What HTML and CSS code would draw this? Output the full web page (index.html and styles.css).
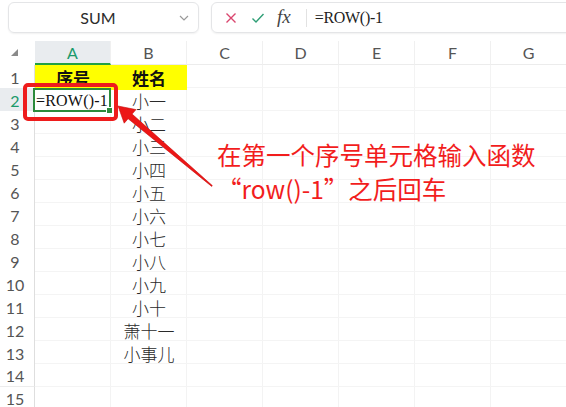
FILE: index.html
```html
<!DOCTYPE html>
<html lang="zh-CN">
<head>
<meta charset="utf-8">
<title>序号函数</title>
<link rel="stylesheet" href="styles.css">
</head>
<body>
<div class="page">
  <div class="toolbar">
    <div class="namebox">
      <span class="name">SUM</span>
      <svg class="chev" width="10" height="6" viewBox="0 0 10 6"><path d="M1 1 L5 5 L9 1" fill="none" stroke="#9a9a9a" stroke-width="1.2"/></svg>
    </div>
    <div class="formula">
      <svg class="ico" width="12" height="12" viewBox="0 0 12 12"><path d="M1.5 1.5 L10.5 10.5 M10.5 1.5 L1.5 10.5" stroke="#d9466e" stroke-width="1.4" fill="none"/></svg>
      <svg class="ico" width="14" height="12" viewBox="0 0 14 12"><path d="M1.5 6.5 L5 10 L12.5 2" stroke="#2f9e76" stroke-width="1.4" fill="none"/></svg>
      <span class="fx">fx</span>
      <span class="divider"></span>
      <span class="ftext">=ROW()-1</span>
    </div>
  </div>

  <div class="sheet">
    <div class="colhead">
      <div class="corner"><svg width="7" height="7" viewBox="0 0 7 7"><polygon points="7,0 7,7 0,7" fill="#8a8a8a"/></svg></div>
      <div class="ch active">A</div>
      <div class="ch">B</div>
      <div class="ch">C</div>
      <div class="ch">D</div>
      <div class="ch">E</div>
      <div class="ch">F</div>
      <div class="ch">G</div>
    </div>
    <div class="row"><div class="rh">1</div><div class="cell title">序号</div><div class="cell title">姓名</div></div>
    <div class="row"><div class="rh current">2</div><div class="cell edit">=ROW()-1<span class="sel"><span class="handle"></span></span></div><div class="cell">小一</div></div>
    <div class="row"><div class="rh">3</div><div class="cell"></div><div class="cell">小二</div></div>
    <div class="row"><div class="rh">4</div><div class="cell"></div><div class="cell">小三</div></div>
    <div class="row"><div class="rh">5</div><div class="cell"></div><div class="cell">小四</div></div>
    <div class="row"><div class="rh">6</div><div class="cell"></div><div class="cell">小五</div></div>
    <div class="row"><div class="rh">7</div><div class="cell"></div><div class="cell">小六</div></div>
    <div class="row"><div class="rh">8</div><div class="cell"></div><div class="cell">小七</div></div>
    <div class="row"><div class="rh">9</div><div class="cell"></div><div class="cell">小八</div></div>
    <div class="row"><div class="rh">10</div><div class="cell"></div><div class="cell">小九</div></div>
    <div class="row"><div class="rh">11</div><div class="cell"></div><div class="cell">小十</div></div>
    <div class="row"><div class="rh">12</div><div class="cell"></div><div class="cell">萧十一</div></div>
    <div class="row"><div class="rh">13</div><div class="cell"></div><div class="cell">小事儿</div></div>
    <div class="row"><div class="rh">14</div><div class="cell"></div><div class="cell"></div></div>
    <div class="row"><div class="rh">15</div><div class="cell"></div><div class="cell"></div></div>
  </div>

  <!-- annotation layer -->
  <div class="mark"></div>
  <svg class="arrow" width="566" height="407" viewBox="0 0 566 407">
    <polygon points="118,106 136,109.6 132.1,114.1 212.3,185.6 211.7,186.4 128.1,118.7 124.2,123.2" fill="#ec1616" stroke="#c81010" stroke-width="0.6" stroke-linejoin="round"/>
  </svg>
  <p class="note">在第一个序号单元格输入函数<br>“row()-1”之后回车</p>
</div>
</body>
</html>
```
FILE: styles.css
```css
html, body {
  margin: 0;
  padding: 0;
  background: #ffffff;
}

body {
  width: 566px;
  height: 407px;
  overflow: hidden;
  font-family: Lato, "Noto Sans", sans-serif;
}

.page {
  position: relative;
  width: 566px;
  height: 407px;
  overflow: hidden;
}

/* ---------- toolbar ---------- */
.toolbar {
  display: flex;
  gap: 12px;
  height: 38px;
  padding: 2px 0 0 8px;
  box-sizing: border-box;
}

.namebox {
  width: 191px;
  height: 31px;
  box-sizing: border-box;
  border: 1px solid #e4e5e7;
  border-radius: 6px;
  box-shadow: 0 1px 2px rgba(0, 0, 0, 0.06);
  display: flex;
  align-items: center;
  padding: 0 9px 0 0;
}

.name {
  flex: 1;
  text-align: center;
  font-size: 16px;
  color: #2b2b2b;
  padding-left: 8px;
}

.chev {
  margin-top: 1px;
}

.formula {
  flex: 1;
  height: 31px;
  box-sizing: border-box;
  border: 1px solid #e4e5e7;
  border-radius: 6px;
  box-shadow: 0 1px 2px rgba(0, 0, 0, 0.06);
  margin-right: -14px;
  display: flex;
  align-items: center;
  padding-left: 13px;
}

.formula .ico:nth-of-type(2) {
  margin-left: 14px;
}

.fx {
  font-family: "Liberation Serif", serif;
  font-style: italic;
  font-size: 19px;
  color: #444;
  margin-left: 12px;
  margin-top: -2px;
}

.divider {
  width: 1px;
  height: 18px;
  background: #e2e2e2;
  margin-left: 15px;
}

.ftext {
  font-family: "Liberation Serif", serif;
  font-size: 16px;
  color: #222;
  margin-left: 8px;
  letter-spacing: -0.3px;
}

/* ---------- sheet ---------- */
.sheet {
  display: flex;
  flex-direction: column;
}

.colhead {
  display: grid;
  grid-template-columns: 35px repeat(7, 76px);
  height: 27px;
}

.corner {
  display: flex;
  align-items: center;
  justify-content: center;
  padding-right: 6px;
  padding-top: 2px;
}

.ch {
  margin-top: 3px;
  display: flex;
  align-items: center;
  justify-content: center;
  font-size: 16px;
  color: #555;
  border-right: 1px solid #f0f0f0;
  border-bottom: 1px solid #ececec;
}

.ch.active {
  background: #e9ecef;
  color: #1b9a6b;
  border-bottom: 2px solid #23a042;
}

.row {
  display: grid;
  grid-template-columns: 35px 76px 76px;
  height: 23px;
  background-image: repeating-linear-gradient(to right, transparent 0 75px, #f3f3f3 75px 76px);
  background-position: 35px 0;
  border-bottom: 1px solid #f4f4f4;
  box-sizing: border-box;
}

.rh {
  display: flex;
  align-items: center;
  justify-content: center;
  padding-right: 4px;
  font-size: 16px;
  color: #555;
  background: #fff;
  border-right: 1px solid #dedede;
  margin-bottom: -1px;
  border-bottom: 1px solid #ececec;
}

.rh.current {
  background: #e9ecef;
  color: #1b9a6b;
}

.cell {
  position: relative;
  display: flex;
  align-items: center;
  justify-content: center;
  font-family: "Noto Sans CJK SC", sans-serif;
  font-size: 17px;
  color: #2a2a2a;
  font-weight: 300;
}

.cell.title {
  background: #ffff00;
  font-weight: 700;
  font-size: 17px;
  color: #111;
  margin-bottom: -1px;
}

.cell.edit {
  justify-content: flex-start;
  padding-left: 1px;
  font-family: "Liberation Serif", serif;
  font-weight: 400;
  font-size: 16px;
  color: #111;
  letter-spacing: 0.2px;
}

/* active cell frame */
.sel {
  position: absolute;
  left: -2px;
  top: 0;
  width: 78px;
  height: 24px;
  box-sizing: border-box;
  border: 2px solid #2c8a3c;
}

.handle {
  position: absolute;
  right: -4px;
  bottom: -4px;
  width: 5px;
  height: 5px;
  background: #2c8a3c;
  border: 1px solid #fff;
}

/* ---------- annotation ---------- */
.mark {
  position: absolute;
  left: 23px;
  top: 83px;
  width: 95px;
  height: 38px;
  box-sizing: border-box;
  border: 4.5px solid #ee1c1c;
  border-radius: 5px;
}

.arrow {
  position: absolute;
  left: 0;
  top: 0;
  pointer-events: none;
}

.note {
  position: absolute;
  left: 217px;
  top: 138px;
  margin: 0;
  font-family: "Noto Sans CJK SC", sans-serif;
  font-size: 24.5px;
  line-height: 34px;
  color: #f21d1d;
  white-space: nowrap;
}
```
